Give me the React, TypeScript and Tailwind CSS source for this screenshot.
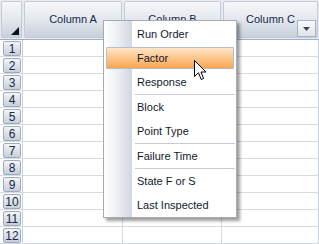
import { useState } from 'react'

const columns = ['Column A', 'Column B', 'Column C']
const rows = Array.from({ length: 12 }, (_, i) => i + 1)

type Item = { label: string; sep?: boolean }

const menuItems: Item[] = [
  { label: 'Run Order' },
  { label: 'Factor' },
  { label: 'Response', sep: true },
  { label: 'Block' },
  { label: 'Point Type', sep: true },
  { label: 'Failure Time', sep: true },
  { label: 'State F or S' },
  { label: 'Last Inspected' },
]

function Cursor() {
  return (
    <svg width="13" height="21" viewBox="0 0 13 21" className="absolute left-[194px] top-[60px]">
      <path d="M0.5 0.5 L0.5 16.5 L4.5 12.8 L7.2 19.5 L9.6 18.5 L7 12 L12 12 Z" fill="#fff" stroke="#000" strokeWidth="1" strokeLinejoin="miter" />
    </svg>
  )
}

export default function App() {
  const [active] = useState('Factor')

  return (
    <div className="relative w-[319px] h-[244px] overflow-hidden bg-white font-['Liberation_Sans',Arial,sans-serif] text-[11px] text-[#15294b]">
      {/* header */}
      <div className="grid grid-cols-[23px_100px_99px_97px] h-[40px] bg-[#e6eaf0] border-b border-[#a3afc0]">
        <div className="m-[1px] rounded-[2px] border border-[#c2cbd7] bg-linear-to-b from-[#f6f7f9] via-[#e4e8ee] to-[#c7d0dc] flex items-end justify-end p-[2px]">
          <svg width="8" height="8" viewBox="0 0 8 8">
            <path d="M8 0 L8 8 L0 8 Z" fill="#111" />
          </svg>
        </div>
        {columns.map((c, i) => (
          <div
            key={c}
            className="relative m-[1px] rounded-[2px] border border-[#c2cbd7] bg-linear-to-b from-[#f6f7f9] via-[#e4e8ee] to-[#c7d0dc] flex items-center justify-center"
          >
            <span className="mb-[1px]">{c}</span>
            {i === 2 && (
              <div className="absolute right-[1px] bottom-[0px] w-[19px] h-[17px] border border-[#a9b4c3] bg-linear-to-b from-[#fafbfc] to-[#dfe4eb] flex items-center justify-center">
                <svg width="7" height="4" viewBox="0 0 7 4">
                  <path d="M0 0 L7 0 L3.5 4 Z" fill="#34465e" />
                </svg>
              </div>
            )}
          </div>
        ))}
      </div>

      {/* rows */}
      {rows.map(r => (
        <div key={r} className="grid grid-cols-[23px_100px_99px_97px] h-[17px] border-b border-[#d5dbe4]">
          <div className="pl-[3px] pr-[1px] pt-[1px] border-r border-[#c9d1dc]">
            <div className="h-[15px] rounded-[2px] border border-[#9eabbd] bg-linear-to-b from-[#f3f5f8] to-[#c6cfdb] flex items-center justify-center text-[12px] leading-none text-[#1b2a44]">
              {r}
            </div>
          </div>
          <div className="border-r border-[#d5dbe4]" />
          <div className="border-r border-[#d5dbe4]" />
          <div className="border-r border-[#c9d1dc]" />
        </div>
      ))}

      {/* context menu */}
      <div className="absolute left-[103px] top-[20px] w-[134px] h-[198px] border border-[#a6abb2] pt-[1px] shadow-[3px_3px_3px_rgba(0,0,0,0.38)] bg-[linear-gradient(to_right,#ffffff_0px,#f2f4f7_10px,#d2d8e1_28px,#ffffff_28px)]">
        {menuItems.map(it => (
          <div key={it.label}>
            {it.label === active ? (
              <div className="h-[24px] px-[2px] py-[1px]">
                <div className="h-[22px] rounded-[1px] border border-[#b5bfcc] bg-linear-to-b from-[#fde6c8] via-[#fcc58a] to-[#f9a64e] flex items-center pl-[30px] text-[#111a2e]">
                  {it.label}
                </div>
              </div>
            ) : (
              <div className="h-[24px] flex items-center pl-[33px] text-[#111a2e]">{it.label}</div>
            )}
            {it.sep && <div className="h-px ml-[31px] mr-[1px] bg-[#c6cdd7]" />}
          </div>
        ))}
      </div>

      <Cursor />
    </div>
  )
}
